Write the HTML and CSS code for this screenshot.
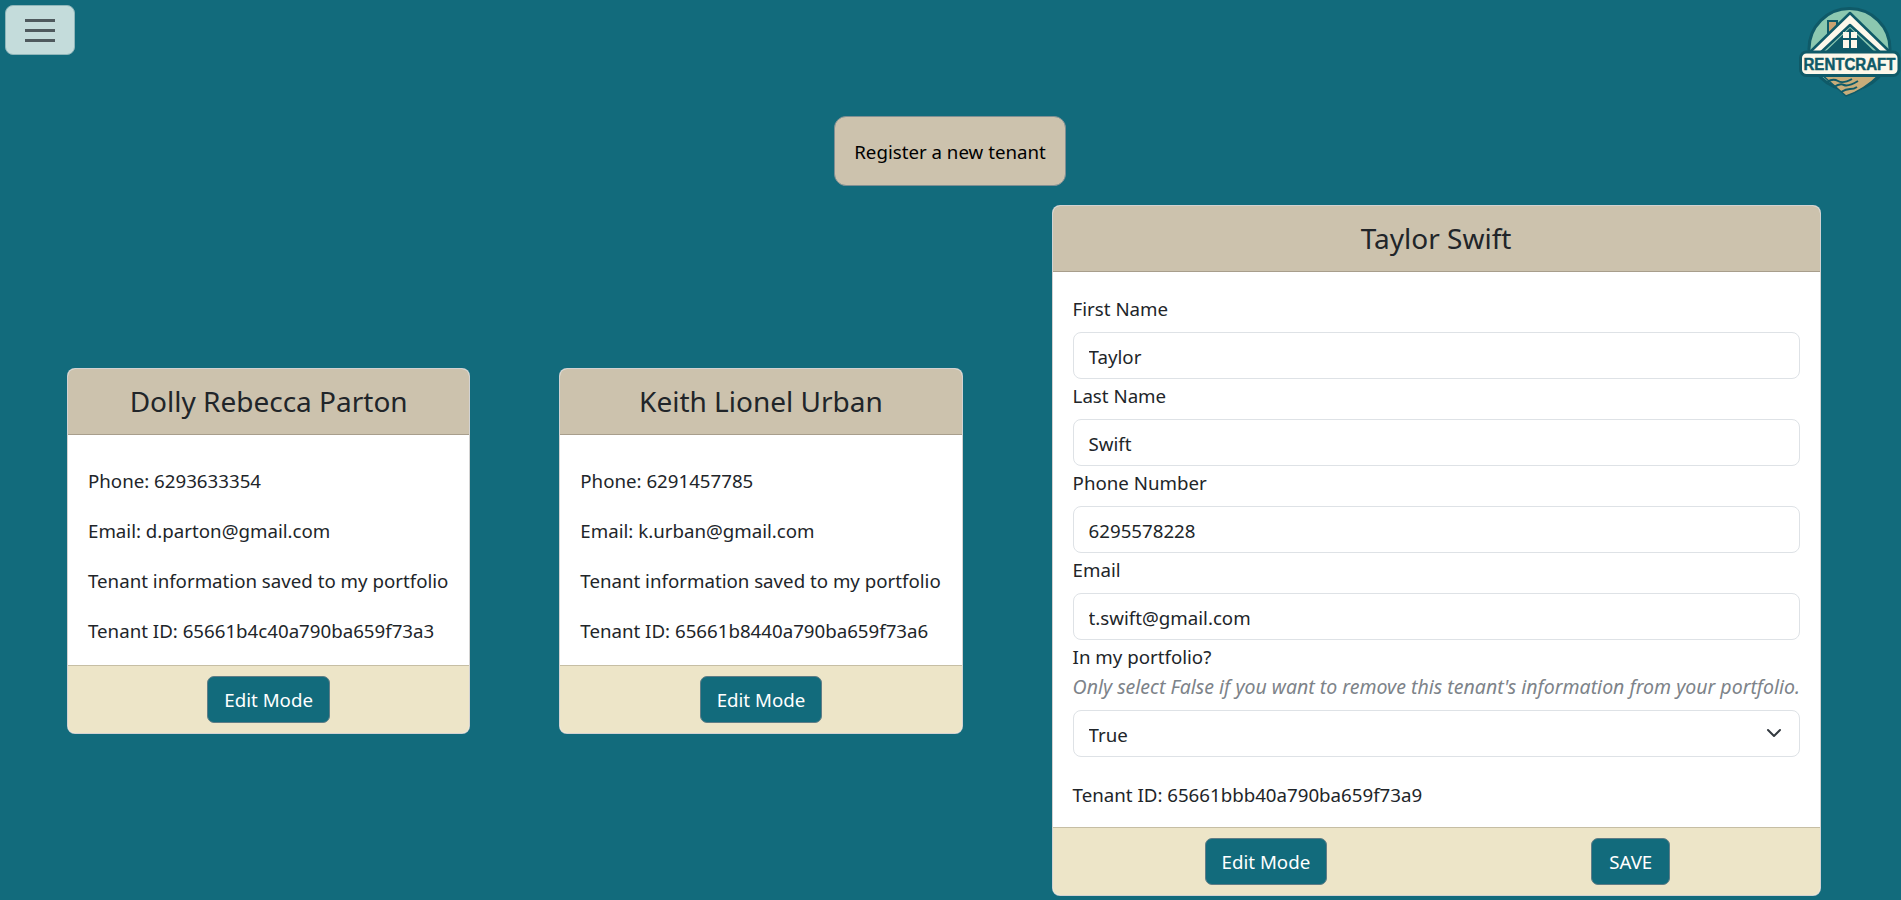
FILE: index.html
```html
<!DOCTYPE html>
<html>
<head>
    <meta name="viewport" content="width=device-width, initial-scale=1"/>
    <title>RentCraft</title>
    <link rel="stylesheet" href="styles.css">
</head>
<body>
    <header class="topbar">
        <button type="button" class="menu-btn" aria-label="Menu">
            <span></span><span></span><span></span>
        </button>
        <svg class="logo" viewBox="0 0 121 110" aria-label="RentCraft logo">
            <circle cx="69.5" cy="49" r="40.5" fill="#8cc8b0" stroke="#0f5a68" stroke-width="3"/>
            <path d="M41 74 L66 96 Q84 90 100 74 Z" fill="#c8ad7a" stroke="#0f5a68" stroke-width="1.5" stroke-linejoin="round"/>
            <path d="M47 82 q6 -4 11 -1 t14 -2 M54 87 q6 -4 10 -2 t14 -4 M61 92 q5 -3 9 -3 t7 -2" fill="none" stroke="#0f5a68" stroke-width="2"/>
            <rect x="48" y="21" width="9" height="15" fill="#c9a271" stroke="#0f5a68" stroke-width="2"/>
            <path d="M29 53 L70 13 L111 53 L103 55 L70 25 L38 55 Z" fill="#fdf8ea" stroke="#0f5a68" stroke-width="2.5" stroke-linejoin="round"/>
            <path d="M70 28 L98 55 L42 55 Z" fill="#0f5a68"/>
            <rect x="63" y="32" width="14" height="16" fill="#fdf8ea"/>
            <path d="M70 32 V48 M63 39 H77" stroke="#0f5a68" stroke-width="2"/>
            <rect x="20.5" y="52" width="98.5" height="23.5" rx="6" fill="#fdf8ea" stroke="#0f5a68" stroke-width="3"/>
            <text x="69.5" y="69.5" text-anchor="middle" class="logo-text" textLength="92" lengthAdjust="spacingAndGlyphs">RENTCRAFT</text>
        </svg>
    </header>

    <div class="register-wrap">
        <button type="button" class="register-btn">Register a new tenant</button>
    </div>

    <main class="tenant-row">
        <section class="card card-small">
            <div class="card-header">Dolly Rebecca Parton</div>
            <div class="card-body">
                <p>Phone: 6293633354</p>
                <p>Email: d.parton@gmail.com</p>
                <p>Tenant information saved to my portfolio</p>
                <p>Tenant ID: 65661b4c40a790ba659f73a3</p>
            </div>
            <div class="card-footer">
                <button type="button" class="btn">Edit Mode</button>
            </div>
        </section>

        <section class="card card-small">
            <div class="card-header">Keith Lionel Urban</div>
            <div class="card-body">
                <p>Phone: 6291457785</p>
                <p>Email: k.urban@gmail.com</p>
                <p>Tenant information saved to my portfolio</p>
                <p>Tenant ID: 65661b8440a790ba659f73a6</p>
            </div>
            <div class="card-footer">
                <button type="button" class="btn">Edit Mode</button>
            </div>
        </section>

        <section class="card card-large">
            <div class="card-header">Taylor Swift</div>
            <form class="card-body card-form">
                <label class="field-label">First Name</label>
                <input class="field" type="text" value="Taylor">
                <label class="field-label">Last Name</label>
                <input class="field" type="text" value="Swift">
                <label class="field-label">Phone Number</label>
                <input class="field" type="text" value="6295578228">
                <label class="field-label">Email</label>
                <input class="field" type="text" value="t.swift@gmail.com">
                <label class="field-label field-label-tight">In my portfolio?</label>
                <em class="hint">Only select False if you want to remove this tenant's information from your portfolio.</em>
                <div class="select-wrap">
                    <select class="field field-select">
                        <option>True</option>
                        <option>False</option>
                    </select>
                    <svg class="chevron" viewBox="0 0 16 16"><path d="M2 5l6 6 6-6" fill="none" stroke="#343a40" stroke-width="2" stroke-linecap="round" stroke-linejoin="round"/></svg>
                </div>
                <p class="tenant-id">Tenant ID: 65661bbb40a790ba659f73a9</p>
            </form>
            <div class="card-footer card-footer-split">
                <button type="button" class="btn">Edit Mode</button>
                <button type="button" class="btn btn-save">SAVE</button>
            </div>
        </section>
    </main>
</body>
</html>
```

FILE: styles.css
```css
* {
    box-sizing: border-box;
}
body {
    margin: 0;
    overflow: hidden;
    background-color: #126b7c;
    color: #212529;
    font-family: "Noto Sans", "Open Sans", sans-serif;
    font-size: 18.7px;
    line-height: 29px;
}
button, input, select {
    font: inherit;
}
.topbar {
    display: flex;
    justify-content: space-between;
    align-items: flex-start;
    height: 116px;
}
.menu-btn {
    display: flex;
    flex-direction: column;
    justify-content: center;
    align-items: center;
    gap: 7px;
    width: 70px;
    height: 50px;
    margin: 5px;
    padding: 0;
    background-color: #c4dcdb;
    border: 1px solid #8fb6ba;
    border-radius: 8px;
}
.menu-btn span {
    display: block;
    width: 30px;
    height: 3px;
    background-color: #4f5a5e;
}
.logo {
    width: 121px;
    height: 110px;
}
.logo-text {
    font-family: "Liberation Sans", sans-serif;
    font-size: 16px;
    font-weight: 700;
    fill: #0f5a68;
    stroke: #0f5a68;
    stroke-width: 0.5;
}
.register-wrap {
    display: flex;
    justify-content: center;
    padding-right: 1px;
    padding-bottom: 19px;
}
.register-btn {
    width: 232px;
    height: 70px;
    padding: 0;
    color: #000;
    background-color: #ccc2ad;
    border: 1px solid #7f8f93;
    border-radius: 12px;
}
.tenant-row {
    display: flex;
    align-items: center;
    gap: 89px;
    padding-left: 67px;
}
.card {
    display: flex;
    flex-direction: column;
    background-color: #fff;
    border: 1px solid rgba(0, 0, 0, 0.175);
    border-radius: 8px;
    overflow: hidden;
}
.card-small {
    width: 403.3px;
}
.card-large {
    width: 769px;
}
.card-header {
    height: 66px;
    text-align: center;
    font-size: 28px;
    line-height: 65px;
    background-color: #ccc2ad;
    border-bottom: 1px solid #a89e8c;
}
.card-body {
    padding: 31px 20px 0;
}
.card-body p {
    margin: 0 0 21px;
}
.card-body p:last-child {
    margin-bottom: 20px;
}
.card-form {
    padding: 20px 20px 0;
}
.card-footer {
    display: flex;
    justify-content: center;
    padding: 10px 0;
    background-color: #ede5c8;
    border-top: 1px solid #c6bea4;
}
.card-footer-split {
    justify-content: flex-start;
    gap: 264px;
    padding-left: 152px;
}
.btn {
    height: 47px;
    padding: 0 16px;
    color: #fff;
    background-color: #126b7c;
    border: 1px solid #5f7d86;
    border-radius: 7px;
}
.btn-save {
    padding: 0 17px;
}
.field-label {
    display: block;
    padding-top: 2px;
    margin-bottom: 9px;
}
.field-label-tight {
    margin-bottom: 1px;
}
.field {
    display: block;
    width: 100%;
    height: 47px;
    padding: 2px 15px 0;
    color: #212529;
    background-color: #fff;
    border: 1px solid #dee2e6;
    border-radius: 8px;
}
.hint {
    display: block;
    height: 30px;
    margin-bottom: 8px;
    color: #7d8389;
    font-size: 19.5px;
    line-height: 30px;
    white-space: nowrap;
}
.select-wrap {
    position: relative;
}
.field-select {
    appearance: none;
}
.chevron {
    position: absolute;
    top: 15px;
    right: 18px;
    width: 16px;
    height: 16px;
}
.card-body .tenant-id:last-child {
    margin: 23px 0 18px;
}
```
